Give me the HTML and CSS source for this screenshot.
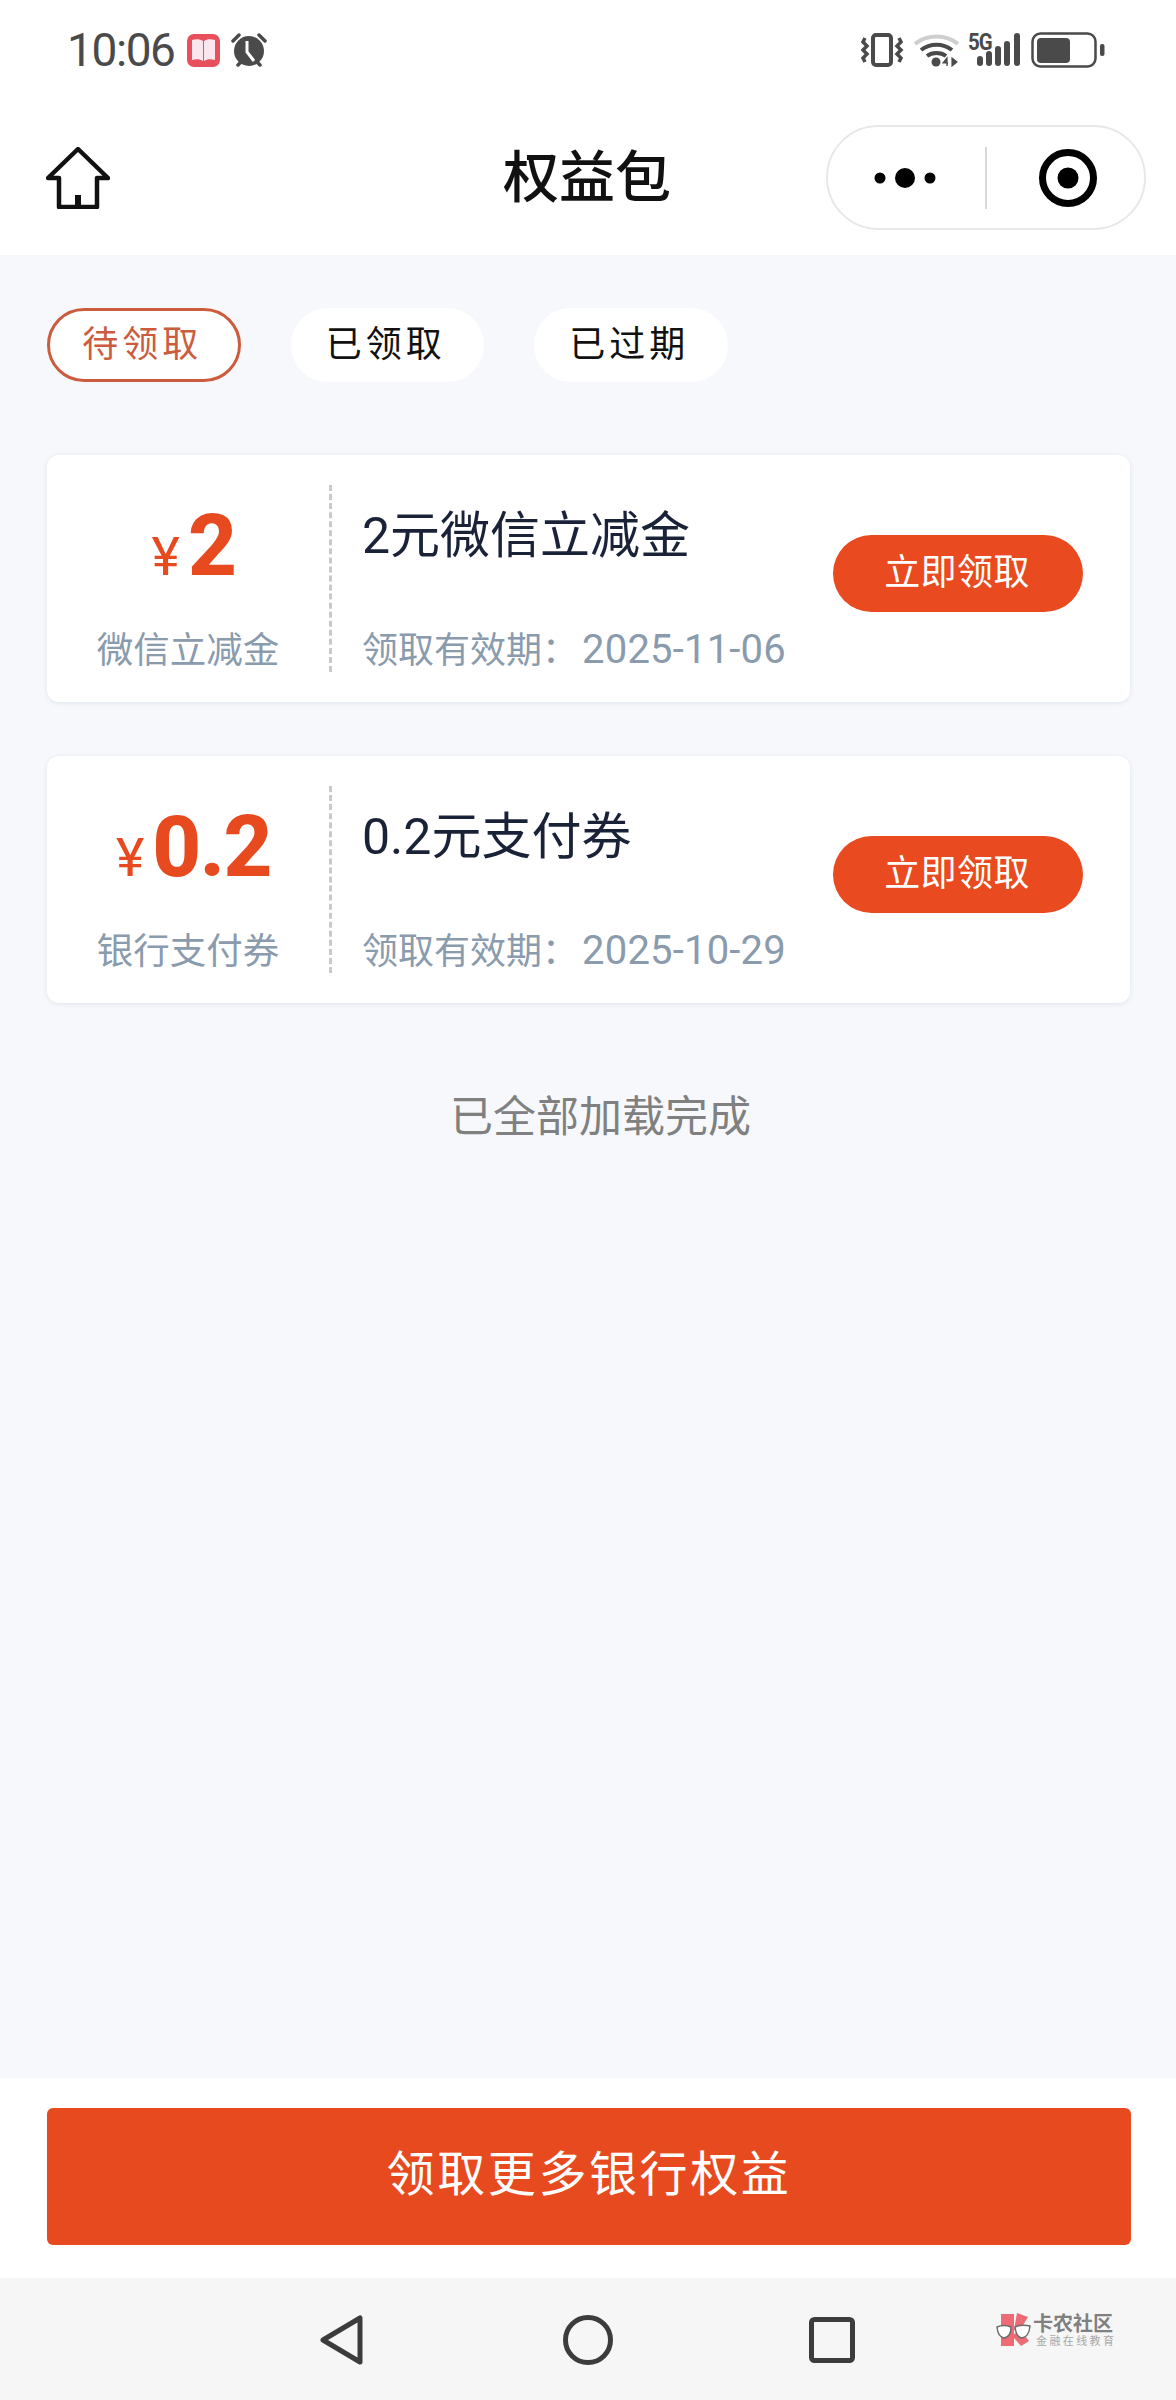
FILE: index.html
```html
<!DOCTYPE html>
<html lang="zh-CN">
<head>
<meta charset="utf-8">
<title>权益包</title>
<link rel="stylesheet" href="styles.css">
</head>
<body>
<div class="page">
  <div class="statusbar">
    <div class="status-left">
      <span class="time">10:06</span>
      <svg class="ic-book" width="33" height="33" viewBox="0 0 33 33"><rect width="33" height="33" rx="7" fill="#e8505b"/><path d="M5 6c4-1 8-1 11 1v20c-3-2-7-2-11-1z" fill="#fbe6ee"/><path d="M28 6c-4-1-8-1-11 1v20c3-2 7-2 11-1z" fill="#fbe6ee"/></svg>
      <svg class="ic-alarm" width="36" height="34" viewBox="0 0 36 34"><circle cx="18" cy="18" r="15" fill="#4a4a4a"/><path d="M2 8l6-6M34 8l-6-6M7 32l3-3M29 32l-3-3" stroke="#4a4a4a" stroke-width="3.5" stroke-linecap="round"/><path d="M16 8v11l7 9" fill="none" stroke="#fff" stroke-width="3"/></svg>
    </div>
    <div class="status-right">
      <svg class="ic-vib" width="43" height="34" viewBox="0 0 43 34"><rect x="12" y="2" width="18" height="30" rx="3" fill="none" stroke="#4a4a4a" stroke-width="4"/><path d="M4 5l-2 4 4 4-4 4 4 4-4 4 2 4M38 5l2 4-4 4 4 4-4 4 4 4-2 4" fill="none" stroke="#4a4a4a" stroke-width="3.5"/></svg>
      <svg class="ic-wifi" width="45" height="34" viewBox="0 0 45 34"><path d="M1 11c12-10 31-10 43 0" fill="none" stroke="#cfcfcf" stroke-width="4"/><path d="M7 17c9-7 22-7 31 0M13 23c5-4 14-4 19 0" fill="none" stroke="#4a4a4a" stroke-width="4"/><circle cx="22" cy="29" r="4.5" fill="#4a4a4a"/><path d="M33 33v-8l-4 5h5M38 25v8l5-4z" fill="#4a4a4a" stroke="#4a4a4a" stroke-width="1.2"/></svg>
      <div class="sig">
        <span class="sig-5g">5G</span>
        <svg class="ic-sig" width="44" height="34" viewBox="0 0 44 34"><rect x="0" y="23" width="6" height="10" rx="3" fill="#4a4a4a"/><rect x="9" y="18" width="6" height="15" rx="3" fill="#4a4a4a"/><rect x="18" y="13" width="6" height="20" rx="3" fill="#4a4a4a"/><rect x="27" y="8" width="6" height="25" rx="3" fill="#4a4a4a"/><rect x="37" y="0" width="6" height="33" rx="3" fill="#4a4a4a"/></svg>
      </div>
      <svg class="ic-bat" width="74" height="36" viewBox="0 0 74 36"><rect x="1.5" y="1.5" width="63" height="33" rx="8" fill="none" stroke="#4a4a4a" stroke-width="2.5"/><rect x="6" y="6" width="33" height="25" rx="4" fill="#4a4a4a"/><rect x="69" y="12" width="4.5" height="12" rx="2" fill="#4a4a4a"/></svg>
    </div>
  </div>

  <header class="navbar">
    <div class="nav-left">
      <svg width="64" height="62" viewBox="0 0 64 62"><path d="M32 2L2 31h11v29h38V31h11z" fill="none" stroke="#111" stroke-width="4.5" stroke-linejoin="round"/><rect x="29" y="48" width="6" height="12" fill="#111"/></svg>
    </div>
    <h1 class="title">权益包</h1>
    <div class="capsule">
      <svg class="cap-more" width="62" height="22" viewBox="0 0 62 22"><circle cx="6" cy="11" r="5.5"/><circle cx="31" cy="11" r="10"/><circle cx="56" cy="11" r="5.5"/></svg>
      <span class="cap-line"></span>
      <svg class="cap-target" width="60" height="60" viewBox="0 0 60 60"><circle cx="30" cy="30" r="25.5" fill="none" stroke="#000" stroke-width="7"/><circle cx="30" cy="30" r="10.5"/></svg>
    </div>
  </header>

  <main class="content">
    <div class="tabs">
      <div class="tab tab-on">待领取</div>
      <div class="tab">已领取</div>
      <div class="tab">已过期</div>
    </div>

    <div class="cards">
      <article class="card">
        <div class="face">
          <div class="amount"><span class="yen">¥</span><span class="num">2</span></div>
          <div class="kind">微信立减金</div>
        </div>
        <div class="info">
          <div class="name">2元微信立减金</div>
          <div class="date">领取有效期：<span class="date-num">2025-11-06</span></div>
        </div>
        <button class="claim">立即领取</button>
      </article>
      <article class="card">
        <div class="face">
          <div class="amount"><span class="yen">¥</span><span class="num">0.2</span></div>
          <div class="kind">银行支付券</div>
        </div>
        <div class="info">
          <div class="name">0.2元支付券</div>
          <div class="date">领取有效期：<span class="date-num">2025-10-29</span></div>
        </div>
        <button class="claim">立即领取</button>
      </article>
    </div>

    <p class="loaded">已全部加载完成</p>
  </main>

  <footer class="footer">
    <button class="more">领取更多银行权益</button>
  </footer>

  <nav class="sysnav">
    <svg class="nav-back" width="44" height="50" viewBox="0 0 44 50"><path d="M3 25L40 3v44z" fill="none" stroke="#3c3c3c" stroke-width="5" stroke-linejoin="round"/></svg>
    <svg class="nav-home" width="50" height="50" viewBox="0 0 50 50"><circle cx="25" cy="25" r="22.5" fill="none" stroke="#3c3c3c" stroke-width="5"/></svg>
    <svg class="nav-recent" width="46" height="46" viewBox="0 0 46 46"><rect x="2.5" y="2.5" width="41" height="41" rx="3" fill="none" stroke="#3c3c3c" stroke-width="5"/></svg>
    <div class="mark">
      <svg width="36" height="36" viewBox="0 0 36 36"><path d="M5 1h13v32H5z" fill="#ee6a75"/><path d="M21 0l11 4-8 13h-6zM18 21l7-3 8 10-8 5-7-8z" fill="#ee6a75"/><path d="M1 14Q8 11 15 14 15 24 8 25 2 24 1 14zM19 14Q26 11 34 13 33 24 26 25 20 24 19 14z" fill="#fff" stroke="#6a6a6a" stroke-width="1.4"/></svg>
      <div class="mark-text">
        <span class="mark-a">卡农社区</span>
        <span class="mark-b">金融在线教育</span>
      </div>
    </div>
  </nav>
</div>
</body>
</html>
```

FILE: styles.css
```css
* { box-sizing: border-box; }
html, body { margin: 0; padding: 0; }
body {
  font-family: Roboto, "Noto Sans CJK SC", "Noto Sans", sans-serif;
  background: #fff;
}
.page {
  width: 1176px;
  height: 2400px;
  display: flex;
  flex-direction: column;
  overflow: hidden;
}

/* status bar */
.statusbar {
  height: 100px;
  flex: none;
  display: flex;
  justify-content: space-between;
  align-items: flex-start;
  padding: 32px 71px 0 67px;
  background: #fff;
  color: #4a4a4a;
}
.status-left, .status-right { display: flex; align-items: center; }
.time { font-size: 46px; line-height: 36px; width: 105px; letter-spacing: -1.4px; white-space: nowrap; }
.ic-book { margin-left: 15px; }
.ic-alarm { margin-left: 11px; }
.ic-wifi { margin-left: 10px; }
.sig { position: relative; width: 52px; height: 34px; margin-left: 10px; }
.sig-5g {
  position: absolute;
  left: -1px;
  top: -3px;
  font-size: 24px;
  line-height: 24px;
  font-weight: 700;
  letter-spacing: -1px;
  transform: scaleX(.85);
  transform-origin: left;
}
.ic-sig { position: absolute; right: 0; top: 0; }
.ic-bat { margin-left: 10px; }

/* nav bar */
.navbar {
  height: 155px;
  flex: none;
  display: grid;
  grid-template-columns: 1fr auto 1fr;
  align-items: center;
  padding: 0 30px 0 46px;
  background: #fff;
}
.nav-left { display: flex; align-items: center; }
.title {
  margin: 0 0 0 -18px;
  font-size: 56px;
  font-weight: 500;
  color: #111;
  line-height: 70px;
}
.capsule {
  justify-self: end;
  width: 320px;
  height: 105px;
  border: 2px solid #e8e8e8;
  border-radius: 53px;
  display: flex;
  align-items: center;
  background: #fff;
}
.cap-more { margin-left: 46px; }
.cap-line { width: 2px; height: 62px; background: #d8d8d8; margin-left: 49px; }
.cap-target { margin-left: 51px; }

/* content */
.content {
  flex: 1;
  background: #f6f8fc;
  padding: 53px 46px 0 47px;
}
.tabs { display: flex; gap: 50px; }
.tab {
  width: 193.5px;
  height: 74px;
  padding: 0 3px 8px 0;
  border-radius: 37px;
  background: #fff;
  color: #111;
  font-size: 36px;
  letter-spacing: 4px;
  display: flex;
  align-items: center;
  justify-content: center;
}
.tab-on { border: 3px solid #cc5c3e; color: #cc5c3e; }

.cards { display: flex; flex-direction: column; gap: 54px; margin-top: 73px; }
.card {
  height: 247px;
  display: flex;
  align-items: stretch;
  padding: 30px 47px 30px 0;
  background: #fff;
  border-radius: 12px;
  box-shadow: 0 1px 5px rgba(40, 60, 90, .1);
}
.face {
  width: 285px;
  flex: none;
  border-right: 3px dashed #c6cacf;
  display: flex;
  flex-direction: column;
  align-items: center;
  justify-content: space-between;
}
.amount { display: flex; align-items: baseline; color: #e84a20; height: 118px; line-height: 122px; padding-left: 11px; }
.yen { font-size: 54px; margin-right: 8px; }
.num { font-size: 85px; font-weight: 800; letter-spacing: -1.5px; }
.kind { font-size: 36.5px; line-height: 54px; color: #8a9bad; margin-bottom: -6px; }
.info {
  flex: 1;
  padding-left: 30px;
  display: flex;
  flex-direction: column;
  justify-content: space-between;
}
.name { font-size: 50px; line-height: 64px; color: #1a2238; margin-top: 19px; }
.date { font-size: 36px; line-height: 54px; color: #8a9bad; margin-bottom: -6px; }
.date-num { font-size: 40px; letter-spacing: .2px; margin-left: 4px; }
.claim {
  align-self: flex-start;
  margin-top: 50px;
  width: 250px;
  height: 77px;
  flex: none;
  padding: 0 2px 10px 0;
  border: 0;
  border-radius: 39px;
  background: #ea4a20;
  color: #fff;
  font-family: inherit;
  font-size: 36px;
  letter-spacing: .4px;
}
.loaded {
  margin: 84px 0 0;
  padding-left: 24px;
  text-align: center;
  font-size: 43px;
  line-height: 60px;
  color: #808080;
}

/* footer */
.footer {
  height: 200px;
  flex: none;
  background: #fff;
  padding: 30px 45px 0 47px;
}
.more {
  width: 100%;
  height: 137px;
  padding: 0 0 13px;
  border: 0;
  border-radius: 6px;
  background: #e84a20;
  color: #fff;
  font-family: inherit;
  font-size: 48px;
  letter-spacing: 2.6px;
}

/* system nav */
.sysnav {
  height: 122px;
  flex: none;
  background: #f6f6f6;
  position: relative;
  display: flex;
  align-items: flex-start;
  padding: 37px 0 0 320px;
}
.nav-home { margin-left: 199px; }
.nav-recent { margin-left: 196px; margin-top: 2px; }
.mark {
  position: absolute;
  left: 996px;
  top: 35px;
  display: flex;
  align-items: center;
}
.mark-text { display: flex; flex-direction: column; margin-left: 1px; }
.mark-a { font-size: 20px; line-height: 21px; font-weight: 700; color: #808080; }
.mark-b { font-size: 11px; line-height: 14px; color: #a8a8a8; letter-spacing: 2.4px; margin-left: 3px; white-space: nowrap; }
```
